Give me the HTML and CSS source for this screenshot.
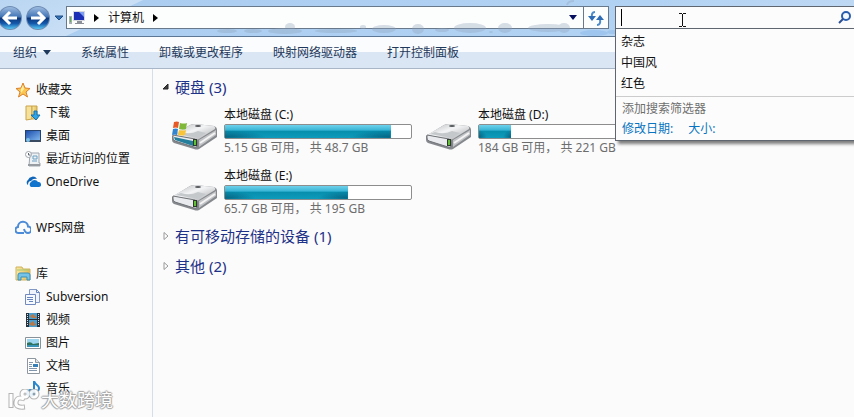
FILE: index.html
```
<!DOCTYPE html>
<html lang="zh-CN">
<head>
    <meta charset="UTF-8">
    <meta name="viewport" content="width=device-width, initial-scale=1.0">
    <title>计算机</title>
    <link rel="stylesheet" href="styles.css">
</head>
<body>
    <svg class="defs" aria-hidden="true">
        <defs>
            <linearGradient id="orb" x1="0" y1="0" x2="0" y2="1">
                <stop offset="0" stop-color="#9dbbe0"/>
                <stop offset=".46" stop-color="#3f72b4"/>
                <stop offset=".5" stop-color="#0b3478"/>
                <stop offset=".75" stop-color="#1459ac"/>
                <stop offset="1" stop-color="#56c8f4"/>
            </linearGradient>
            <linearGradient id="metal" x1="0" y1="0" x2="1" y2="1">
                <stop offset="0" stop-color="#b4b6b9"/>
                <stop offset=".45" stop-color="#f3f4f5"/>
                <stop offset="1" stop-color="#a4a6aa"/>
            </linearGradient>
            <linearGradient id="screen" x1="0" y1="0" x2="1" y2="1">
                <stop offset="0" stop-color="#1d4fae"/>
                <stop offset="1" stop-color="#7fb5ec"/>
            </linearGradient>
            <linearGradient id="folder" x1="0" y1="0" x2="1" y2="0">
                <stop offset="0" stop-color="#f9e9a4"/>
                <stop offset="1" stop-color="#e3bd57"/>
            </linearGradient>
            <symbol id="drive" viewBox="0 0 46 28">
                <path d="M1 14 19 3Q21 2 24 2L43 4Q46 5 46 8L46 15 28 27Q26 28 23 27L3 21Q1 20 1 18Z" fill="#85888c"/>
                <path d="M2 13 19 3Q21 2 24 2L43 4Q45 5 44 7L28 17Q26 18 23 17Z" fill="url(#metal)"/>
                <path d="M2 13 24 17Q26 18 26 20V24Q26 26 23 25L4 19Q2 18 2 16Z" fill="#e9ebee" stroke="#707377"/>
                <path d="M28 18 45 8V13L28 25Z" fill="#c1c3c6"/>
                <path d="m29 21 15-10" stroke="#f4f4f4" stroke-width="2"/>
                <path d="M10 10q9 3 17-1l8 2-8 5-22-4Z" fill="#c5c8cb"/>
                <ellipse cx="27" cy="4" rx="3" ry="1" fill="#55585b"/>
                <path d="M22 17h4v7h-4z" fill="#2f3a2e"/>
                <path d="M24 18v5" stroke="#62c034" stroke-width="2"/>
            </symbol>
        </defs>
    </svg>

    <header class="topbar">
        <svg class="smudge" viewBox="0 0 640 36" aria-hidden="true">
            <g fill="#8fa3bb">
                <ellipse cx="227" cy="31" rx="10" ry="2"/><ellipse cx="253" cy="31" rx="9" ry="2"/>
                <ellipse cx="285" cy="31" rx="17" ry="3"/><ellipse cx="290" cy="27" rx="5" ry="4"/>
                <ellipse cx="336" cy="31" rx="21" ry="2"/><ellipse cx="363" cy="27" rx="3" ry="2"/>
                <ellipse cx="384" cy="29" rx="12" ry="4"/><ellipse cx="418" cy="29" rx="6" ry="5"/>
                <ellipse cx="442" cy="30" rx="7" ry="2"/><ellipse cx="470" cy="28" rx="16" ry="5"/>
                <ellipse cx="491" cy="32" rx="2" ry="1"/><ellipse cx="505" cy="28" rx="7" ry="5"/>
                <ellipse cx="548" cy="28" rx="20" ry="4"/><ellipse cx="564" cy="28" rx="6" ry="5"/>
            </g>
            <g fill="#79aee3"><ellipse cx="594" cy="33" rx="14" ry="3"/><ellipse cx="613" cy="32" rx="6" ry="2"/></g>
            <path d="M567 5q1-4 7-4" stroke="#8fa3bb" stroke-width="2" fill="none"/>
        </svg>
        <div class="nav">
            <button class="orb" aria-label="后退">
                <svg width="24" height="26" viewBox="0 0 24 26"><circle cx="12" cy="13" r="12" fill="#6d8bb2"/><circle cx="12" cy="13" r="11" fill="url(#orb)"/><path d="M19 13H8M12 7l-6 6 6 6" fill="none" stroke="#fff" stroke-width="3"/></svg>
            </button>
            <button class="orb" aria-label="前进">
                <svg width="24" height="26" viewBox="0 0 24 26"><circle cx="12" cy="13" r="12" fill="#6d8bb2"/><circle cx="12" cy="13" r="11" fill="url(#orb)"/><path d="M5 13h11M12 7l6 6-6 6" fill="none" stroke="#fff" stroke-width="3"/></svg>
            </button>
            <button class="recent" aria-label="最近的页面">
                <svg width="10" height="6" viewBox="0 0 10 6"><path d="M1 1h8L5 5Z" fill="#3774b8" stroke="#1d4c82"/></svg>
            </button>
        </div>
        <div class="address">
            <svg class="icon" viewBox="0 0 16 16">
                <path d="M4 1h12v10H4z" fill="#d6d9df"/><path d="M5 2h10v8H5z" fill="#1b30b4"/><path d="M10 2h5v5z" fill="#7f9df0"/>
                <path d="M8 11h5v2H8zM6 13h9v1H6z" fill="#8b9099"/><path d="M0 6h3v8H0z" fill="#a8aeb5"/><path d="M1 7h1v5H1z" fill="#58b648"/>
            </svg>
            <svg class="crumb" viewBox="0 0 5 8"><path d="M0 0l5 4-5 4Z"/></svg>
            <a href="#">计算机</a>
            <svg class="crumb" viewBox="0 0 5 8"><path d="M0 0l5 4-5 4Z"/></svg>
            <button class="history" aria-label="以前的位置">
                <svg width="8" height="5" viewBox="0 0 8 5"><path d="M0 0h8L4 5Z" fill="#06105e"/></svg>
            </button>
            <button class="refresh" aria-label="刷新">
                <svg width="16" height="16" viewBox="0 0 16 16"><path d="M7 2Q3 2 4 8" fill="none" stroke="#4d8ccb" stroke-width="2"/><path d="M0 6h8l-4 5Z" fill="#2e6db5"/><path d="M9 15q4 0 3-6" fill="none" stroke="#4d8ccb" stroke-width="2"/><path d="M8 10h8l-4-5Z" fill="#2e6db5"/></svg>
            </button>
        </div>
        <div class="search">
            <input type="text" aria-label="搜索">
            <span class="caret"></span>
            <svg class="pointer" viewBox="0 0 7 14"><path d="M0 .5h3M4 .5h3M3.500 1v12M0 13.500h3M4 13.500h3" stroke="#111" fill="none"/></svg>
            <button class="go" aria-label="开始搜索">
                <svg width="14" height="14" viewBox="0 0 14 14"><circle cx="8" cy="5" r="4" fill="#f5faff" stroke="#2a5fae" stroke-width="2"/><path d="M5 8l-4 4" stroke="#2a4f94" stroke-width="2"/></svg>
            </button>
            <div class="suggest">
                <ul>
                    <li>杂志</li>
                    <li>中国风</li>
                    <li>红色</li>
                </ul>
                <div class="filters">
                    <p>添加搜索筛选器</p>
                    <a href="#">修改日期:</a>
                    <a href="#">大小:</a>
                </div>
            </div>
        </div>
    </header>

    <div class="toolbar">
        <button>组织 <svg width="8" height="5" viewBox="0 0 8 5"><path d="M0 0h8L4 5Z" fill="#1e395b"/></svg></button>
        <button>系统属性</button>
        <button>卸载或更改程序</button>
        <button>映射网络驱动器</button>
        <button>打开控制面板</button>
    </div>

    <div class="content">
        <nav class="sidebar">
            <ul>
                <li class="root"><a href="#">
                    <svg class="icon" viewBox="0 0 16 16"><path d="M8 1l2 5 5 .5-4 3.500 1.500 5L8 12l-4.500 3L5 10 1 6.500 6 6Z" fill="#fcc653" stroke="#d9812b"/><path d="M8 3l1 4-3 4 0-4Z" fill="#fff0a0"/></svg>收藏夹</a></li>
                <li><a href="#">
                    <svg class="icon" viewBox="0 0 16 16"><path d="M1 1h6v13l-6 1z" fill="#f6e19a" stroke="#c9a34a"/><path d="M7 1h5v13H7z" fill="url(#folder)" stroke="#c9a34a"/><path d="M9 6h3v4h3l-4 5-5-5h3z" fill="#2fa5e5" stroke="#1671ae"/></svg>下载</a></li>
                <li><a href="#">
                    <svg class="icon" viewBox="0 0 16 16"><path d="M0 2h16v12H0z" fill="#26436f"/><path d="M1 3h14v9H1z" fill="url(#screen)"/><path d="M0 12h16v2H0z" fill="#3a4a61"/><circle cx="3" cy="12" r="2" fill="#7bc0e8"/></svg>桌面</a></li>
                <li><a href="#">
                    <svg class="icon" viewBox="0 0 16 16"><path d="M5 2h9v10h1v3H4z" fill="#edf1f4" stroke="#a0a7ae"/><path d="M8 5h4v3H8zM7 10h5" fill="none" stroke="#6ba0c4"/><path d="M3 14h12" stroke="#979ca2" stroke-width="2"/><circle cx="3.500" cy="3.500" r="3" fill="#fff" stroke="#9ca4ac"/><path d="M3.500 2v2h2" fill="none" stroke="#59636e"/></svg>最近访问的位置</a></li>
                <li><a href="#">
                    <svg class="icon" viewBox="0 0 16 16"><path d="M3 11a3 3 0 0 1 0-5 5 5 0 0 1 9-1Q8 4 6 7 3 7 3 11Z" fill="#0f65b8"/><path d="M6 13a3 3 0 0 1 0-5 4 4 0 0 1 7 0 2.500 2.500 0 0 1 1 5Z" fill="#1274cc"/></svg>OneDrive</a></li>
            </ul>
            <ul>
                <li class="root"><a href="#">
                    <svg class="icon" viewBox="0 0 16 16"><path d="M9 13H4a3 3 0 0 1-1-6 5 5 0 0 1 10-.5 3 3 0 0 1 0 6.500q-3 0-4-4" fill="none" stroke="#4c8bd8" stroke-width="2"/></svg>WPS网盘</a></li>
            </ul>
            <ul>
                <li class="root"><a href="#">
                    <svg class="icon" viewBox="0 0 16 16"><path d="M1 1h6l1 2h7v11H1z" fill="url(#folder)" stroke="#d0b25c"/><path d="M2 4h12" stroke="#a5c878" stroke-width="1"/><path d="M3 14V9q0-2 2-2h8q2 0 2 2v5h-3v-3H6v3z" fill="#75c4e7" stroke="#3d8fb8"/></svg>库</a></li>
                <li><a href="#">
                    <svg class="icon" viewBox="0 0 16 16"><path d="M4.500.5h7l3 3v10h-10z" fill="#edf2fb" stroke="#8298c4"/><path d="M.5 5.500h10v10H.5z" fill="#f6f9ff" stroke="#7189bd"/><path d="M2 8.500h6M2 10.500h6M4 12.500h4M11.500.5v3h3" fill="none" stroke="#6583be"/></svg>Subversion</a></li>
                <li><a href="#">
                    <svg class="icon" viewBox="0 0 16 16"><path d="M1 1h14v14H1z" fill="#29323a"/><path d="M4 1h8v6H4zM4 8h8v7H4z" fill="#4a9fd0"/><path d="M5 4l3-2 4 4H7zM4 12l4-3 3 4-4 1z" fill="#b77947"/><path d="M2.500 2v12M13.500 2v12" stroke="#dce5eb" stroke-dasharray="1 1"/></svg>视频</a></li>
                <li><a href="#">
                    <svg class="icon" viewBox="0 0 16 16"><path d="M.5 2.500h15v11H.5z" fill="#fff" stroke="#8a9299"/><path d="M2 4h12v8H2z" fill="#9dd6ee"/><path d="M2 8q4-2 6 1l6-1v4H2z" fill="#2c725f"/><path d="M2 10h12v2H2z" fill="#3993b8"/></svg>图片</a></li>
                <li><a href="#">
                    <svg class="icon" viewBox="0 0 16 16"><path d="M2.500.5h8l4 4v11h-12z" fill="#fff" stroke="#8e969e"/><path d="M10.500.5v4h4" fill="#dfe5ea" stroke="#8e969e"/><path d="M4 4.500h4M4 6.500h3M4 8.500h3M4 10.500h8M4 12.500h8" stroke="#8196ac"/><path d="M8 6h5v3H8z" fill="#3780b9"/></svg>文档</a></li>
                <li><a href="#">
                    <svg class="icon" viewBox="0 0 16 16"><path d="M9 12V0q1 3 4 5 2 2 0 5" fill="none" stroke="#2b87cc" stroke-width="2"/><ellipse cx="6" cy="12" rx="5" ry="4" fill="#2183c9"/><ellipse cx="5" cy="11" rx="2" ry="1" fill="#8acdf1"/></svg>音乐</a></li>
            </ul>
        </nav>

        <main class="drives">
            <h2><button aria-expanded="true"><svg width="8" height="8" viewBox="0 0 8 8"><path d="M6 1v5H1Z" fill="#404040" stroke="#262626"/></svg>硬盘 (3)</button></h2>
            <div class="grid">
                <div class="drive">
                    <div class="drive-icon">
                        <svg width="46" height="28"><use href="#drive"/><path d="M3 15l19 4v5L4 18Z" fill="#257e9b"/></svg>
                        <svg class="flag" width="16" height="15" viewBox="0 0 16 15"><path d="M2 1q3-1 5 0L6 7Q4 6 1 7Z" fill="#e65a27"/><path d="M8 2q4 1 7 0l-1 6q-3 1-7 0Z" fill="#80b93a"/><path d="M1 8q3-1 5 0l-1 6q-2-1-5 0Z" fill="#3184d0"/><path d="M7 9q4 1 7 0l-1 5q-3 1-7 0Z" fill="#fac438"/></svg>
                    </div>
                    <div class="info">
                        <p class="name">本地磁盘 (C:)</p>
                        <div class="bar"><div class="used" style="width: 89%"></div></div>
                        <p class="space">5.15 GB 可用， 共 48.7 GB</p>
                    </div>
                </div>
                <div class="drive">
                    <div class="drive-icon"><svg width="46" height="28"><use href="#drive"/></svg></div>
                    <div class="info">
                        <p class="name">本地磁盘 (D:)</p>
                        <div class="bar"><div class="used" style="width: 17%"></div></div>
                        <p class="space">184 GB 可用， 共 221 GB</p>
                    </div>
                </div>
                <div class="drive">
                    <div class="drive-icon"><svg width="46" height="28"><use href="#drive"/></svg></div>
                    <div class="info">
                        <p class="name">本地磁盘 (E:)</p>
                        <div class="bar"><div class="used" style="width: 66%"></div></div>
                        <p class="space">65.7 GB 可用， 共 195 GB</p>
                    </div>
                </div>
            </div>
            <h2><button aria-expanded="false"><svg width="8" height="8" viewBox="0 0 8 8"><path d="M2 0.500v7l4-3.500Z" fill="#fff" stroke="#989898"/></svg>有可移动存储的设备 (1)</button></h2>
            <h2><button aria-expanded="false"><svg width="8" height="8" viewBox="0 0 8 8"><path d="M2 0.500v7l4-3.500Z" fill="#fff" stroke="#989898"/></svg>其他 (2)</button></h2>
        </main>
    </div>

    <div class="watermark">
        <svg width="32" height="22" viewBox="0 0 32 22"><g fill="none" stroke="#adadad" stroke-width="5"><path d="M3 4v15M17 10q-8-3-9 3t9 5"/><circle cx="17" cy="5" r="3"/><circle cx="26" cy="5" r="3"/></g><g fill="none" stroke="#fff" stroke-width="3"><path d="M3 5v13M16 10q-7-3-8 3t8 5"/><circle cx="17" cy="5" r="3"/><circle cx="26" cy="5" r="3"/></g></svg>
        <span>大数跨境</span>
    </div>
</body>
</html>
```
FILE: styles.css
```
* {
    margin: 0;
    padding: 0;
    box-sizing: border-box;
}
body {
    font-family: 'Noto Sans', 'Noto Sans CJK SC', sans-serif;
    font-size: 12px;
    line-height: 18px;
    background: #fbfbfc;
    color: #111;
    min-height: 100vh;
    overflow: hidden;
    display: flex;
    flex-direction: column;
}
button {
    font: inherit;
    color: inherit;
    background: none;
    border: none;
}
a {
    color: inherit;
    text-decoration: none;
}
ul {
    list-style: none;
}
svg {
    display: block;
    flex: none;
}
.defs {
    position: absolute;
    width: 0;
    height: 0;
}
.icon {
    width: 16px;
    height: 16px;
}

/* top bar */
.topbar {
    position: relative;
    z-index: 2;
    display: flex;
    height: 36px;
    padding-top: 6px;
    align-items: flex-start;
    background: linear-gradient(155deg, #b9d5f1 0, #c9dff6 60px, #abcdf0 61px, #b2d2f3 70%, #c2daf4 100%);
}
.smudge {
    position: absolute;
    z-index: 1;
    left: 0;
    top: 0;
    width: 640px;
    height: 36px;
    opacity: 0.35;
    pointer-events: none;
}
.nav {
    display: flex;
    align-items: center;
    width: 66px;
    height: 24px;
    flex: none;
}
.orb {
    width: 24px;
    height: 26px;
    margin-right: 4px;
}
.orb:first-child {
    margin-left: -2px;
}
.recent {
    width: 10px;
}
.address {
    display: flex;
    flex: 1;
    align-items: center;
    height: 23px;
    padding-left: 2px;
    margin-right: 6px;
    background: #fcfdfd;
    border: 1px solid #68798c;
}
.crumb {
    width: 5px;
    height: 8px;
    margin: 0 9px;
}
.history {
    width: 20px;
    margin-left: auto;
    display: flex;
    justify-content: center;
}
.refresh {
    display: flex;
    align-items: center;
    justify-content: center;
    width: 25px;
    height: 21px;
    border-left: 1px solid #68798c;
}
.search {
    position: relative;
    z-index: 2;
    display: flex;
    align-items: center;
    width: 28%;
    height: 23px;
    background: #fcfcfc;
    border: 1px solid #5f6670;
    border-right: none;
}
.search input {
    flex: 1;
    min-width: 0;
    height: 21px;
    padding-left: 6px;
    font: inherit;
    background: none;
    border: none;
    outline: none;
}
.go {
    margin-right: 2px;
}
.caret {
    position: absolute;
    left: 5px;
    top: 2px;
    width: 1px;
    height: 17px;
    background: #000;
}
.pointer {
    position: absolute;
    left: 63px;
    top: 6px;
    width: 7px;
    height: 14px;
}
.suggest {
    position: absolute;
    left: -1px;
    right: 0;
    top: 21px;
    background: #fcfcfc;
    border: 1px solid #5f6670;
    border-right: none;
    box-shadow: 3px 3px 3px rgba(0, 0, 0, 0.5);
}
.suggest ul {
    padding: 2px 5px;
    border-bottom: 1px solid #ccc;
}
.suggest li {
    line-height: 21px;
}
.filters {
    padding: 2px 6px 1px;
    line-height: 20px;
}
.filters p {
    color: #6f6f6f;
}
.filters a {
    color: #0874c0;
    margin-right: 12px;
}

/* toolbar */
.toolbar {
    display: flex;
    gap: 30px;
    height: 33px;
    padding-left: 13px;
    color: #1e395b;
    background: linear-gradient(#fbfcfd 50%, #dbe6f4 50%);
    border-top: 1px solid #5b7795;
    border-bottom: 1px solid #a9b6c8;
}
.toolbar button {
    display: flex;
    align-items: center;
    gap: 6px;
}

/* content */
.content {
    display: flex;
    flex: 1;
}
.sidebar {
    width: 153px;
    flex: none;
    padding: 9px 0 0 15px;
    border-right: 1px solid #d5dfeb;
}
.sidebar ul {
    margin-bottom: 23px;
}
.sidebar ul:last-child {
    margin-bottom: 0;
}
.sidebar li {
    height: 23px;
    padding-left: 10px;
}
.sidebar .root {
    padding-left: 0;
}
.sidebar a {
    display: flex;
    align-items: center;
    gap: 5px;
    height: 23px;
}
.drives {
    flex: 1;
    padding: 3px 0 0 9px;
}
.drives h2 {
    height: 30px;
    font-size: 15px;
    font-weight: normal;
    color: #1e3287;
}
.drives h2 button {
    display: flex;
    align-items: center;
    gap: 5px;
    height: 30px;
}
.grid {
    display: grid;
    grid-template-columns: repeat(auto-fill, 254px);
    padding: 3px 0 0 9px;
    margin-bottom: -6px;
}
.drive {
    display: flex;
    align-items: center;
    gap: 6px;
    height: 61px;
    padding-bottom: 8px;
}
.drive-icon {
    position: relative;
    width: 47px;
    padding-top: 8px;
}
.flag {
    position: absolute;
    left: 1px;
    top: 7px;
}
.info {
    width: 188px;
}
.bar {
    height: 15px;
    background: #fff;
    border: 1px solid #8d8d8d;
    border-radius: 2px;
}
.used {
    height: 100%;
    background:
        radial-gradient(ellipse at 0 100%, rgba(0, 60, 90, 0.6), transparent 70%) 0 100% / 25% 60% no-repeat,
        radial-gradient(ellipse at 100% 100%, rgba(0, 60, 90, 0.6), transparent 70%) 100% 100% / 25% 60% no-repeat,
        linear-gradient(#6fd2ec, #35b2d3 42%, #078dac 43%, #0e9bbb);
}
.space {
    color: #6d6d6d;
}

.watermark {
    position: absolute;
    left: 8px;
    bottom: 6px;
    display: flex;
    align-items: center;
    gap: 1px;
    color: #fff;
    font-size: 18px;
    line-height: 20px;
    opacity: 0.9;
    text-shadow: 1px 0 1px #999, -1px 0 1px #999, 0 1px 1px #999, 0 -1px 1px #999;
}
```
